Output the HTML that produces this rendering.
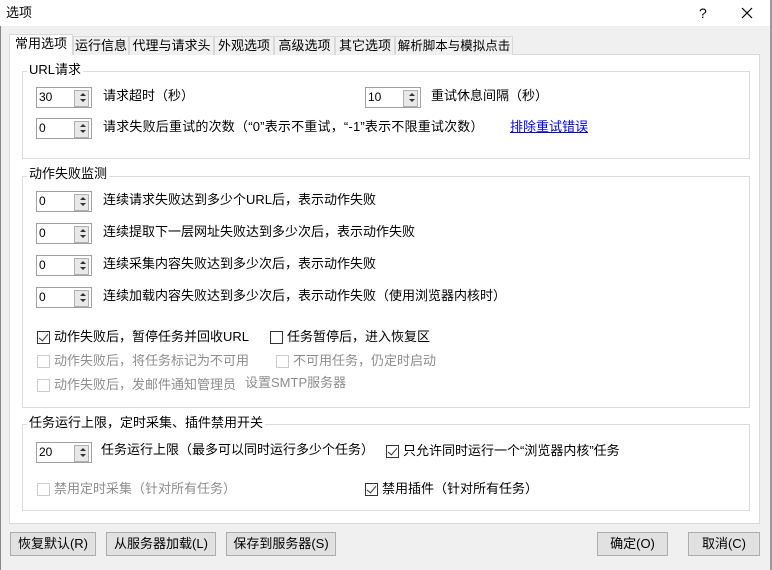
<!DOCTYPE html>
<html><head><meta charset="utf-8"><style>
*{box-sizing:border-box;margin:0;padding:0}
body{width:772px;height:570px;background:#f0f0f0;font-family:"Liberation Sans","Noto Sans CJK SC","WenQuanYi Zen Hei",sans-serif;font-size:13px;color:#000;position:relative;overflow:hidden}
.a{position:absolute;white-space:nowrap;line-height:16px}
#title{position:absolute;left:0;top:0;width:772px;height:26px;background:#fff}
#panel{position:absolute;left:9px;top:54px;width:751px;height:470px;background:#fff;border:1px solid #d9d9d9}
.tab{position:absolute;top:36px;height:19px;background:#f0f0f0;border:1px solid #d9d9d9;border-bottom:none;text-align:center;line-height:18px;white-space:nowrap;overflow:hidden}
.tab.sel{top:34px;height:21px;background:#fff;z-index:2}
.grp{position:absolute;border:1px solid #dcdcdc}
.gl{position:absolute;background:#fff;padding:0 2px;line-height:14px}
.spin{position:absolute;width:56px;height:21px;border:1px solid #a0a0a0;background:#fff;padding-left:2px;line-height:19px;font-size:12px}
.spin:after{content:"";position:absolute;right:2px;top:2px;width:13px;height:15px;background:#e8e8e8;border:1px solid #b0b0b0}
.spin i{position:absolute;right:5px;width:0;height:0;border-left:3px solid transparent;border-right:3px solid transparent;z-index:2}
.spin i.u{top:5px;border-bottom:3px solid #333}
.spin i.d{top:11px;border-top:3px solid #333}
.cb{position:absolute;width:13px;height:13px;border:1px solid #333;background:#fff}
.cb.dis{border-color:#ccc}
.cb.on:after{content:"";position:absolute;left:3px;top:0px;width:4px;height:8px;border-right:1.5px solid #333;border-bottom:1.5px solid #333;transform:rotate(40deg)}
.g{color:#8d8d8d}
.btn{position:absolute;top:532px;height:24px;background:#e1e1e1;border:1px solid #adadad;text-align:center;line-height:22px;white-space:nowrap}
</style></head><body>
<div id="title"></div>
<div class="a" style="left:6px;top:5px">选项</div>
<div class="a" style="left:699px;top:5px;font-size:14px">?</div>
<svg style="position:absolute;left:741px;top:7px" width="12" height="12"><path d="M1 1L11 11M11 1L1 11" stroke="#000" stroke-width="1.2"/></svg>
<div style="position:absolute;left:0;top:26px;width:1px;height:544px;background:#888"></div>
<div style="position:absolute;left:770px;top:0;width:2px;height:570px;background:#999"></div>

<div id="panel"></div>
<div class="tab sel" style="left:9px;width:64px">常用选项</div>
<div class="tab" style="left:73px;width:56px">运行信息</div>
<div class="tab" style="left:129px;width:85px">代理与请求头</div>
<div class="tab" style="left:214px;width:60px">外观选项</div>
<div class="tab" style="left:274px;width:61px">高级选项</div>
<div class="tab" style="left:335px;width:60px">其它选项</div>
<div class="tab" style="left:395px;width:118px;font-size:12.5px">解析脚本与模拟点击</div>

<div class="grp" style="left:22px;top:71px;width:728px;height:88px"></div>
<div class="gl" style="left:27px;top:63px">URL请求</div>
<div class="spin" style="left:36px;top:87px">30<i class="u"></i><i class="d"></i></div>
<div class="a" style="left:103px;top:88px">请求超时（秒）</div>
<div class="spin" style="left:365px;top:87px">10<i class="u"></i><i class="d"></i></div>
<div class="a" style="left:431px;top:88px">重试休息间隔（秒）</div>
<div class="spin" style="left:36px;top:118px">0<i class="u"></i><i class="d"></i></div>
<div class="a" style="left:103px;top:119px;letter-spacing:0.2px">请求失败后重试的次数（“0”表示不重试，“-1”表示不限重试次数）</div>
<div class="a" style="left:510px;top:119px;color:#0000ee;text-decoration:underline">排除重试错误</div>

<div class="grp" style="left:22px;top:176px;width:728px;height:232px"></div>
<div class="gl" style="left:27px;top:167px">动作失败监测</div>
<div class="spin" style="left:36px;top:191px">0<i class="u"></i><i class="d"></i></div>
<div class="a" style="left:103px;top:192px">连续请求失败达到多少个URL后，表示动作失败</div>
<div class="spin" style="left:36px;top:223px">0<i class="u"></i><i class="d"></i></div>
<div class="a" style="left:103px;top:224px">连续提取下一层网址失败达到多少次后，表示动作失败</div>
<div class="spin" style="left:36px;top:255px">0<i class="u"></i><i class="d"></i></div>
<div class="a" style="left:103px;top:256px">连续采集内容失败达到多少次后，表示动作失败</div>
<div class="spin" style="left:36px;top:287px">0<i class="u"></i><i class="d"></i></div>
<div class="a" style="left:103px;top:288px">连续加载内容失败达到多少次后，表示动作失败（使用浏览器内核时）</div>
<div class="cb on" style="left:37px;top:331px"></div>
<div class="a" style="left:54px;top:329px">动作失败后，暂停任务并回收URL</div>
<div class="cb" style="left:270px;top:331px"></div>
<div class="a" style="left:287px;top:329px">任务暂停后，进入恢复区</div>
<div class="cb dis" style="left:37px;top:355px"></div>
<div class="a g" style="left:54px;top:353px">动作失败后，将任务标记为不可用</div>
<div class="cb dis" style="left:276px;top:355px"></div>
<div class="a g" style="left:293px;top:353px">不可用任务，仍定时启动</div>
<div class="cb dis" style="left:37px;top:379px"></div>
<div class="a g" style="left:54px;top:377px">动作失败后，发邮件通知管理员</div>
<div class="a g" style="left:245px;top:375px">设置SMTP服务器</div>

<div class="grp" style="left:22px;top:424px;width:728px;height:87px"></div>
<div class="gl" style="left:27px;top:416px">任务运行上限，定时采集、插件禁用开关</div>
<div class="spin" style="left:36px;top:442px">20<i class="u"></i><i class="d"></i></div>
<div class="a" style="left:101px;top:442px">任务运行上限（最多可以同时运行多少个任务）</div>
<div class="cb on" style="left:386px;top:445px"></div>
<div class="a" style="left:403px;top:443px">只允许同时运行一个“浏览器内核”任务</div>
<div class="cb dis" style="left:37px;top:483px"></div>
<div class="a g" style="left:54px;top:481px">禁用定时采集（针对所有任务）</div>
<div class="cb on" style="left:365px;top:483px"></div>
<div class="a" style="left:382px;top:481px">禁用插件（针对所有任务）</div>

<div class="btn" style="left:10px;width:86px">恢复默认(R)</div>
<div class="btn" style="left:106px;width:110px">从服务器加载(L)</div>
<div class="btn" style="left:226px;width:110px">保存到服务器(S)</div>
<div class="btn" style="left:597px;width:71px">确定(O)</div>
<div class="btn" style="left:688px;width:72px">取消(C)</div>
</body></html>
